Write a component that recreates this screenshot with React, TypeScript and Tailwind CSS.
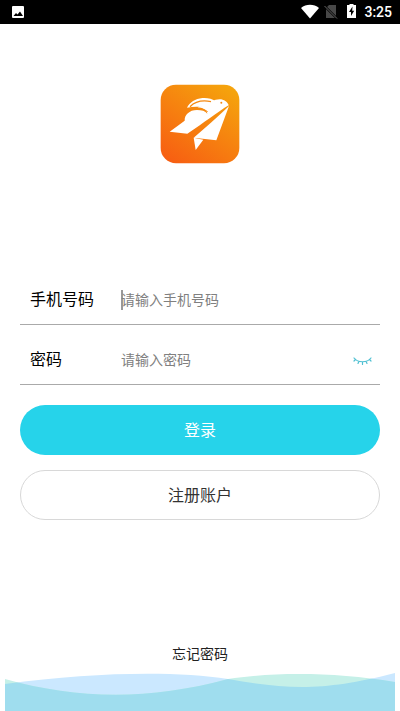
import React, { useState } from 'react';

const FONT = "font-['Roboto','Noto_Sans_CJK_SC',sans-serif]";

function StatusBar() {
  return (
    <header className="flex h-6 items-center justify-between bg-black pr-2 pl-3 text-white">
      <svg className="h-3 w-3" viewBox="0 0 12 12" aria-hidden="true">
        <rect width="12" height="12" rx="1" fill="#fff" />
        <path d="M1.5 10 4 7l1.5 1.5L8 5.5l3 4.5z" fill="#000" />
      </svg>
      <div className="flex items-center">
        <svg className="h-4 w-[18px]" viewBox="0 0 18 16" aria-hidden="true">
          <path d="M0 4C5-.2 13-.2 18 4L9 14.5z" fill="#fff" />
        </svg>
        <svg className="ml-1 h-4 w-4" viewBox="0 0 16 16" aria-hidden="true">
          <path d="M6 1h7v13H3V4z" fill="#484848" />
          <path d="M2 2.5 14.5 15" stroke="#000" strokeWidth="2.4" />
          <path d="M1.5 2 14 14.5" stroke="#666" strokeWidth="1" />
        </svg>
        <svg className="ml-2 h-4 w-[9px]" viewBox="0 0 9 16" aria-hidden="true">
          <path d="M0 1h2.5V0h4v1H9v13H0z" fill="#fff" />
          <path d="M5.5 2.5 2 8h2v4l3.2-5.3h-2z" fill="#000" />
        </svg>
        <span className="ml-2 text-sm font-medium">3:25</span>
      </div>
    </header>
  );
}

function Logo() {
  return (
    <svg className="size-20" viewBox="16 12 240 240" role="img" aria-label="logo">
      <defs>
        <linearGradient id="logo-bg" x1="0.1" y1="1" x2="0.8" y2="0">
          <stop offset="0" stopColor="#f75d12" />
          <stop offset="1" stopColor="#f5a30d" />
        </linearGradient>
      </defs>
      <rect x="18" y="14" width="236" height="236" rx="46" fill="url(#logo-bg)" />
      <g fill="#fff">
        <path d="M45 155 90 122C89 105 104 90 127 90c14 0 25 3 31 11-2-13-15-18-30-19 18-4 32-8 44-18 12-7 30-9 40-1 6 4 9 9 10 13C186 98 150 127 98 161z" />
        <path d="M97 83c8-16 25-27 46-29 16-1 30 2 38 9l-9 7c-9 8-23 11-36 11-14-1-26 0-39 2z" />
        <path d="M223 78 185 181l-68-8c36-30 71-62 106-95z" />
        <path d="m117 173 29 6-23 31z" />
      </g>
      <path d="M106 80c16-16 39-20 63-15" fill="none" stroke="#f58a12" strokeWidth="4" />
      <path d="M107 87c18-4 37-2 52 8" fill="none" stroke="#f58a12" strokeWidth="3" />
      <circle cx="200" cy="68" r="3" fill="#f58a12" />
    </svg>
  );
}

function ClosedEye() {
  return (
    <svg
      className="block h-2.5 w-5"
      viewBox="0 0 20 10"
      fill="none"
      stroke="#4fc0d2"
      strokeWidth="1.2"
      strokeLinecap="round"
      aria-hidden="true"
    >
      <path d="M2 2c4 5 13 5 17 0M3.5 3.5 2 5M17.5 3.5 19 5M7 5.2 6 7.5M14 5.2l1 2.3M10.5 6v2.5" />
    </svg>
  );
}

function Waves() {
  return (
    <svg className="block h-[38px] w-full" viewBox="0 0 390 38" preserveAspectRatio="none" aria-hidden="true">
      <defs>
        <clipPath id="wave-blue">
          <path d="M0 11C90-1 170-2 223 6 285 17 320 18 390 0V38H0z" />
        </clipPath>
      </defs>
      <path d="M0 11C90-1 170-2 223 6 285 17 320 18 390 0V38H0z" fill="#cbe8ff" />
      <path d="M0 6C75 27 145 27 223 6 270-1 330-1 390 9V38H0z" fill="#c5f0e8" />
      <path d="M0 6C75 27 145 27 223 6 270-1 330-1 390 9V38H0z" fill="#9fddee" clipPath="url(#wave-blue)" />
    </svg>
  );
}

export default function App() {
  const [phone, setPhone] = useState('');
  const [password, setPassword] = useState('');
  const [visible, setVisible] = useState(false);

  return (
    <div className={`flex min-h-screen flex-col bg-white ${FONT}`}>
      <StatusBar />
      <main className="flex flex-1 flex-col">
        <div className="flex justify-center pt-[60px]">
          <Logo />
        </div>
        <form className="mt-28 px-5" onSubmit={(e) => e.preventDefault()}>
          <div className="flex h-[49px] items-center border-b border-[#aaa] pl-2.5">
            <label htmlFor="phone" className="w-[91px] text-base text-black">
              手机号码
            </label>
            <span className="-mr-0.5 h-5 w-0.5 bg-[#999]" />
            <input
              id="phone"
              type="tel"
              value={phone}
              onChange={(e) => setPhone(e.target.value)}
              placeholder="请输入手机号码"
              className="min-w-0 flex-1 text-sm outline-none placeholder:text-[#808080]"
            />
          </div>
          <div className="mt-2.5 flex h-[50px] items-center border-b border-[#aaa] pr-2 pl-2.5">
            <label htmlFor="password" className="w-[91px] text-base text-black">
              密码
            </label>
            <input
              id="password"
              type={visible ? 'text' : 'password'}
              value={password}
              onChange={(e) => setPassword(e.target.value)}
              placeholder="请输入密码"
              className="min-w-0 flex-1 text-sm outline-none placeholder:text-[#808080]"
            />
            <button type="button" aria-label="显示密码" className="pt-0.5" onClick={() => setVisible(!visible)}>
              <ClosedEye />
            </button>
          </div>
          <button type="submit" className="mt-5 h-[50px] w-full rounded-full bg-[#26d3ea] pt-0.5 text-base text-white">
            登录
          </button>
          <button
            type="button"
            className="mt-[15px] h-[50px] w-full rounded-full border border-[#d8d8d8] pt-0.5 text-base text-[#333]"
          >
            注册账户
          </button>
        </form>
        <footer className="mt-auto px-[5px] text-center">
          <a href="#forgot" className="mb-[9px] inline-block text-sm text-[#222]">
            忘记密码
          </a>
          <Waves />
        </footer>
      </main>
    </div>
  );
}
